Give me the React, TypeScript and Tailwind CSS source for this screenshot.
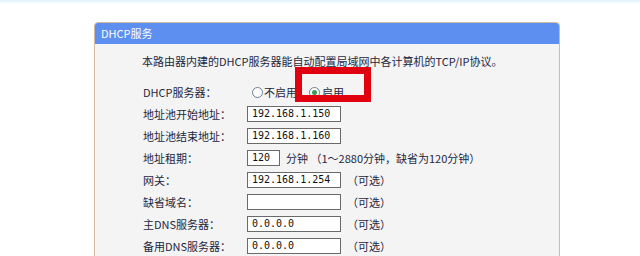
import React from 'react';

const rows: { label: string; value?: string; width?: string; note?: string }[] = [
  { label: '地址池开始地址：', value: '192.168.1.150' },
  { label: '地址池结束地址：', value: '192.168.1.160' },
  { label: '地址租期：', value: '120', width: 'w-[33px]', note: '分钟 （1～2880分钟，缺省为120分钟）' },
  { label: '网关：', value: '192.168.1.254', note: '（可选）' },
  { label: '缺省域名：', value: '', note: '（可选）' },
  { label: '主DNS服务器：', value: '0.0.0.0', note: '（可选）' },
  { label: '备用DNS服务器：', value: '0.0.0.0', note: '（可选）' },
];

const Radio = ({ checked }: { checked?: boolean }) => (
  <span className="inline-flex h-[11px] w-[11px] items-center justify-center rounded-full border border-[#6f7f95] bg-white">
    {checked && <span className="h-[5px] w-[5px] rounded-full bg-[#3d9a52]" />}
  </span>
);

export default function App() {
  return (
    <div
      className="relative h-[256px] w-[640px] overflow-hidden bg-white text-[11px] text-[#1d2740]"
      style={{ fontFamily: '"Noto Sans CJK SC", "Liberation Sans", sans-serif' }}
    >
      <div className="h-[4px] bg-gradient-to-b from-[#dff3fb] to-white" />

      <div className="ml-[94px] mt-[18px] w-[466px] rounded-t-[4px] border border-[#d2bb9f] bg-[#f4f4f4]">
        <div className="flex h-[21px] items-center rounded-t-[3px] bg-[#5d8ff0] pl-[6px] text-[11px] text-white">
          DHCP服务
        </div>

        <div className="pl-[47px] pt-[10px]">
          <div className="h-[14px] leading-[14px]">
            本路由器内建的DHCP服务器能自动配置局域网中各计算机的TCP/IP协议。
          </div>

          <div className="mt-[13px]">
            <div className="flex h-[22px] items-center">
              <div className="w-[105px] pl-[1px]">DHCP服务器：</div>
              <label className="ml-[5px] flex items-center gap-[1px]">
                <Radio />
                <span>不启用</span>
              </label>
              <label className="ml-[12px] flex items-center gap-[2px]">
                <Radio checked />
                <span>启用</span>
              </label>
            </div>

            {rows.map((r) => (
              <div key={r.label} className="flex h-[22px] items-center">
                <div className="w-[105px] pl-[1px]">{r.label}</div>
                <div
                  className={`${r.width ?? 'w-[94px]'} flex h-[16px] items-center border border-[#6a6a6a] bg-white pl-[4px] font-['DejaVu_Sans_Mono',monospace] text-[10px] leading-none text-[#111]`}
                >
                  {r.value}
                </div>
                {r.note && <div className="ml-[6px] whitespace-nowrap">{r.note}</div>}
              </div>
            ))}
          </div>
        </div>
      </div>

      {/* red highlight drawn over the radio */}
      <div className="absolute left-[295px] top-[67px] h-[35px] w-[76px] border-[7px] border-[#e10010]" />
    </div>
  );
}
